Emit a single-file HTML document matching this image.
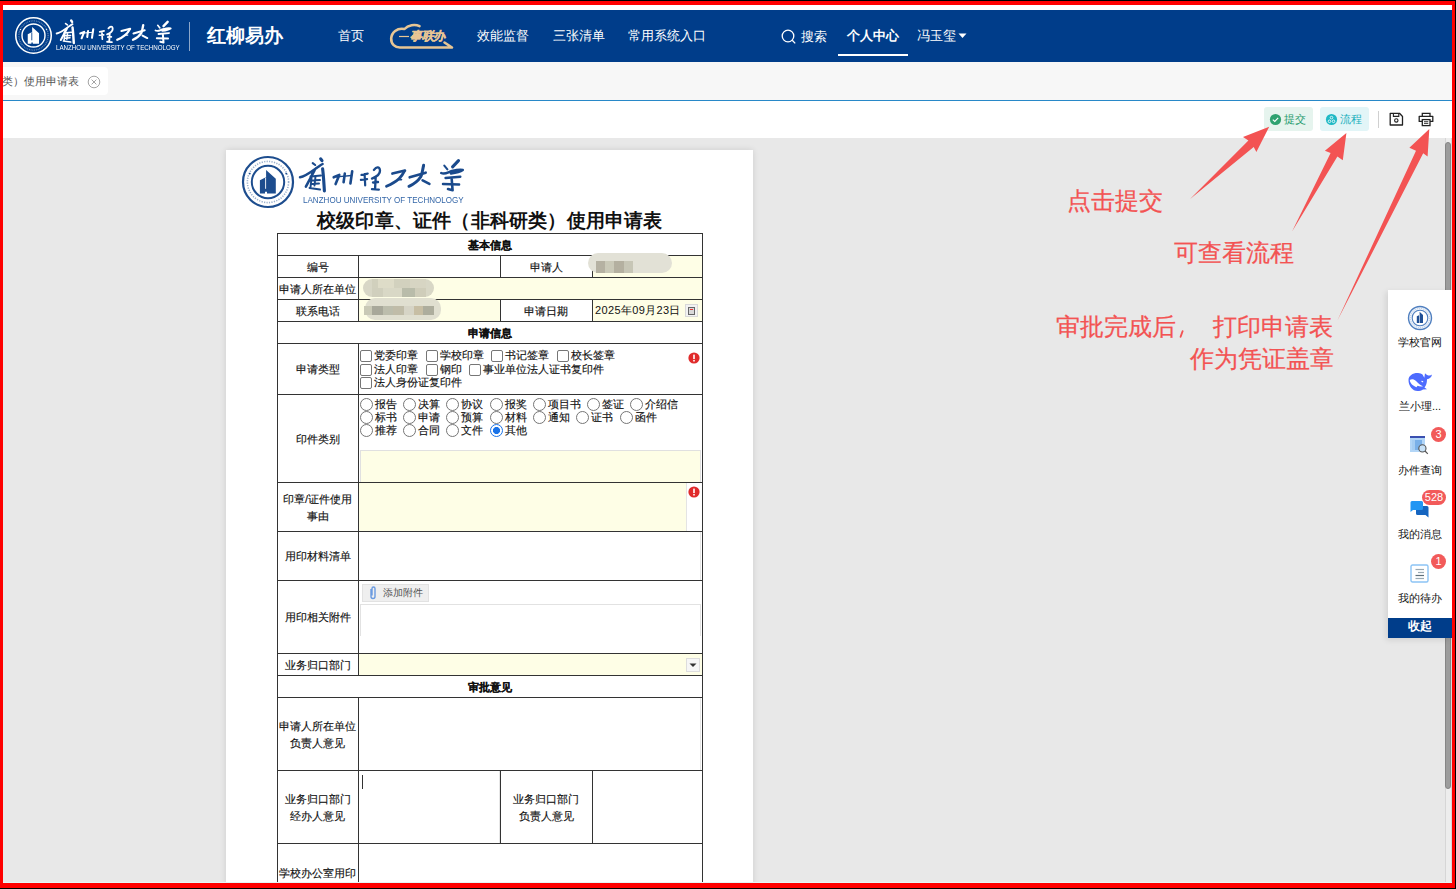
<!DOCTYPE html><html><head><meta charset="utf-8"><style>
html,body{margin:0;padding:0}
body{width:1456px;height:889px;position:relative;overflow:hidden;background:#e8e8e8;font-family:"Liberation Sans",sans-serif;}
div,span{box-sizing:border-box}
.cb{position:absolute;width:12px;height:12px;border:1px solid #767676;border-radius:2px;background:#fff}
.rd{position:absolute;width:13px;height:13px;border:1px solid #767676;border-radius:50%;background:#fff}
.ot{position:absolute;font-size:11.3px;color:#111;-webkit-text-stroke:0.15px #111;white-space:nowrap;line-height:13px}
.lb{position:absolute;font-size:11px;color:#111;-webkit-text-stroke:0.15px #111;white-space:nowrap;text-align:center}
.hl{position:absolute;height:1px;background:#333}
.vl{position:absolute;width:1px;background:#333}
.nav{position:absolute;top:27px;font-size:14px;color:#fff;white-space:nowrap;line-height:18px}
.sbt{position:absolute;left:1388px;width:64px;text-align:center;font-size:11px;color:#111;white-space:nowrap;line-height:12px}
.bdg{position:absolute;height:15px;border-radius:8px;background:#f25a5a;color:#fff;font-size:11px;line-height:15px;text-align:center}
</style></head><body>
<div style="position:absolute;left:3px;top:5px;width:1449px;height:5px;background:#fff"></div>
<div style="position:absolute;left:3px;top:10px;width:1449px;height:52px;background:#003d8a"></div>
<div style="position:absolute;left:3px;top:62px;width:1449px;height:38px;background:#f7f7f7"></div>
<div style="position:absolute;left:3px;top:100px;width:1449px;height:1px;background:#2888c8"></div>
<div style="position:absolute;left:3px;top:101px;width:1449px;height:37px;background:#fff"></div>

<svg style="position:absolute;left:0;top:0" width="300" height="70" viewBox="0 0 300 70"><g style="color:#fff" transform="translate(12.2,14.2) scale(0.71)">
<circle cx="30" cy="30" r="25" fill="none" stroke="currentColor" stroke-width="2.2"/>
<circle cx="30" cy="30" r="16.2" fill="none" stroke="currentColor" stroke-width="2"/>
<circle cx="30" cy="30" r="20.6" fill="none" stroke="currentColor" stroke-width="1.6" stroke-dasharray="1.2 1.3" opacity="0.45"/>
<circle cx="11.8" cy="21.6" r="0.9" fill="currentColor"/><circle cx="48.2" cy="21.6" r="0.9" fill="currentColor"/>
<path d="M21.9 28.3 L27.4 25.4 L28.1 25.4 L28.1 17.9 L37.8 26.7 L37.8 41.5 L29 41.5 L29 39.8 L27 39.8 L27 41.5 L21.9 41.5 Z" fill="currentColor"/><path d="M27.6 25.8 L27.6 36.8" stroke="#003d8a" stroke-width="1.2"/>
</g><g fill="none" stroke="#fff" stroke-linecap="round" stroke-linejoin="round" transform="translate(56,19.3) scale(0.7)"><path d="M21.7 1.8 L23 3.7" stroke-width="3.48"/><path d="M13.7 6.1 L16.2 8" stroke-width="2.32"/><path d="M1 20.3 C6 19.5 12 15 17.4 11.1 C19.5 9.7 21.5 8 23.6 7" stroke-width="2.75"/><path d="M15.5 13.5 L6.9 29.6" stroke-width="2.90"/><path d="M23.6 11.7 C24.5 18 24.8 25 25.4 33.9" stroke-width="3.48"/><path d="M11.5 19.5 L22 18.5 M11 23.5 L21 23 M13 16.5 L11.5 30.5 M16.5 19.5 L15.5 28.5 M10.5 31 L21 32.5 M12 27 L20 26.5" stroke-width="2.17"/><path d="M34.7 20.3 L40.3 17.9 L36.6 27.1 M45.8 16.6 L44.6 25.3 M53.2 14.2 L51.4 26.5" stroke-width="2.90"/><path d="M40.3 19.7 L52.6 18.5" stroke-width="1.45"/><path d="M62.5 17.9 L68.7 16.6 M61.9 22.8 L68.1 22.2 M65.6 17.2 L66.2 28.4" stroke-width="2.46"/><path d="M74.9 12.9 C77 10.5 80.5 8.5 81 13.5 C81.2 16.5 78 19.5 73 21.6 M76.7 19.7 L76.1 31.5 M73 32.1 L79.8 32.7 M74 25.5 L79 25" stroke-width="2.61"/><path d="M93.4 16.6 L106 13.5" stroke-width="2.90"/><path d="M105.4 14.2 C103 19 100 24 87.5 29.3" stroke-width="3.19"/><path d="M99.5 22.8 L102.5 22.6" stroke-width="1.74"/><path d="M110.7 20.3 L126.7 15.7" stroke-width="2.90"/><path d="M124.6 8.3 C123.5 13 123 18 121.8 19.7 C119 24 115 27 110 29.3" stroke-width="3.33"/><path d="M123.6 23.4 L130.4 26.8" stroke-width="2.90"/><path d="M159.5 3.7 L153.6 9.8" stroke-width="3.48"/><path d="M145.3 8.6 L148.4 12.3" stroke-width="2.32"/><path d="M142.2 16 C146 18 149 15 153 14 C157 13 162 12.5 163.8 13 C161 15 156 16 152 16.5" stroke-width="2.75"/><path d="M146.5 21 L161.3 19.7 M144 27.1 L160.1 27.4" stroke-width="2.75"/><path d="M152.7 22.2 L153.6 33.3 L149 32.1" stroke-width="2.90"/></g></svg>
<div style="position:absolute;left:56px;top:44px;white-space:nowrap;font-size:6.6px;line-height:8px;color:#fff;transform:scaleX(0.94);transform-origin:0 0">LANZHOU UNIVERSITY OF TECHNOLOGY</div>
<div style="position:absolute;left:189px;top:22px;width:1px;height:29px;background:rgba(255,255,255,0.55)"></div>
<div style="position:absolute;left:207px;top:24px;white-space:nowrap;font-size:19px;line-height:24px;color:#fff;font-weight:bold">红柳易办</div>
<div style="position:absolute;left:338px;top:27px;white-space:nowrap;font-size:13px;line-height:18px;color:#fff">首页</div>
<svg style="position:absolute;left:385px;top:20px" width="75" height="32" viewBox="0 0 75 32">
<path d="M34.5 6.2 C30 3.8 23 5 19.5 9 C12 7.5 6.5 12.5 6.2 18.5 C6 24 10 27.5 15 27.5 L67 27.5 L59.5 22.5" fill="none" stroke="#e6c594" stroke-width="2.6" stroke-linecap="round" stroke-linejoin="round"/>
<line x1="14" y1="16.5" x2="24" y2="16.5" stroke="#e6c594" stroke-width="1.2"/>
</svg>
<div style="position:absolute;left:410px;top:29px;white-space:nowrap;font-size:12px;line-height:14px;color:#e6c594;font-weight:bold;font-style:italic;letter-spacing:-0.5px;-webkit-text-stroke:0.3px #e6c594">事联办</div>
<div style="position:absolute;left:477px;top:27px;white-space:nowrap;font-size:13px;line-height:18px;color:#fff">效能监督</div>
<div style="position:absolute;left:553px;top:27px;white-space:nowrap;font-size:13px;line-height:18px;color:#fff">三张清单</div>
<div style="position:absolute;left:628px;top:27px;white-space:nowrap;font-size:13px;line-height:18px;color:#fff">常用系统入口</div>
<svg style="position:absolute;left:781px;top:29px" width="17" height="17" viewBox="0 0 17 17">
<circle cx="7" cy="7" r="5.8" fill="none" stroke="#fff" stroke-width="1.3"/>
<line x1="11.2" y1="11.2" x2="14.2" y2="14.4" stroke="#fff" stroke-width="1.3"/>
</svg>
<div style="position:absolute;left:801px;top:28px;white-space:nowrap;font-size:13px;line-height:18px;color:#fff">搜索</div>
<div style="position:absolute;left:847px;top:27px;white-space:nowrap;font-size:13px;line-height:18px;color:#fff;font-weight:bold">个人中心</div>
<div style="position:absolute;left:838px;top:54px;width:70px;height:2px;background:#fff"></div>
<div style="position:absolute;left:917px;top:27px;white-space:nowrap;font-size:13px;line-height:18px;color:#fff">冯玉玺</div>
<svg style="position:absolute;left:958px;top:33px" width="10" height="6" viewBox="0 0 10 6"><path d="M0.5 0.5 L8.5 0.5 L4.5 5 Z" fill="#fff"/></svg>
<div style="position:absolute;left:3px;top:67px;width:105px;height:28px;background:#fff;border-radius:0 4px 4px 0"></div>
<div style="position:absolute;left:1.5px;top:73px;white-space:nowrap;font-size:11.3px;line-height:16px;color:#555">类）使用申请表</div>
<svg style="position:absolute;left:87px;top:75px" width="14" height="14" viewBox="0 0 14 14">
<circle cx="7" cy="7" r="5.8" fill="none" stroke="#999" stroke-width="0.9"/>
<path d="M4.6 4.6 L9.4 9.4 M9.4 4.6 L4.6 9.4" stroke="#999" stroke-width="0.9"/>
</svg>
<div style="position:absolute;left:1264px;top:107px;width:49px;height:24px;background:#e6f4ee;border-radius:3px"></div>
<svg style="position:absolute;left:1269px;top:113px" width="13" height="13" viewBox="0 0 13 13">
<circle cx="6.5" cy="6.5" r="5.6" fill="#2ea270"/>
<path d="M3.8 6.6 L5.8 8.4 L9.2 4.8" fill="none" stroke="#fff" stroke-width="1.1"/>
</svg>
<div style="position:absolute;left:1284px;top:111px;white-space:nowrap;font-size:11px;line-height:16px;color:#23996a">提交</div>
<div style="position:absolute;left:1320px;top:107px;width:49px;height:24px;background:#e2f5f7;border-radius:3px"></div>
<svg style="position:absolute;left:1325px;top:113px" width="13" height="13" viewBox="0 0 13 13">
<circle cx="6.5" cy="6.5" r="5.6" fill="#1fb9c5"/>
<circle cx="6.5" cy="4.6" r="1.3" fill="none" stroke="#fff" stroke-width="0.8"/>
<circle cx="4.5" cy="8.3" r="1.3" fill="none" stroke="#fff" stroke-width="0.8"/>
<circle cx="8.5" cy="8.3" r="1.3" fill="none" stroke="#fff" stroke-width="0.8"/>
</svg>
<div style="position:absolute;left:1340px;top:111px;white-space:nowrap;font-size:11px;line-height:16px;color:#1ab0bd">流程</div>
<div style="position:absolute;left:1378px;top:111px;width:1px;height:17px;background:#d0d0d0"></div>
<svg style="position:absolute;left:1389px;top:112px" width="15" height="15" viewBox="0 0 15 15">
<path d="M1.2 1.3 H10.5 L13.5 4.5 V13 H1.2 Z" fill="none" stroke="#222" stroke-width="1.3" stroke-linejoin="round"/>
<path d="M4.4 1.3 V4.4 H9.8 V1.3" fill="none" stroke="#222" stroke-width="1.1"/>
<circle cx="7.3" cy="8.4" r="1.7" fill="none" stroke="#222" stroke-width="1.1"/>
</svg>
<svg style="position:absolute;left:1418px;top:112px" width="16" height="15" viewBox="0 0 16 15">
<path d="M4.3 4 V1.3 H12 V4" fill="none" stroke="#222" stroke-width="1.3"/>
<path d="M4.3 9.4 H1.2 V4.3 H14.8 V9.4 H12" fill="none" stroke="#222" stroke-width="1.3" stroke-linejoin="round"/>
<rect x="4.3" y="7.6" width="7.7" height="6" fill="#fff" stroke="#222" stroke-width="1.3"/>
<line x1="6" y1="9.7" x2="10.3" y2="9.7" stroke="#222" stroke-width="0.9"/>
<line x1="6" y1="11.4" x2="10.3" y2="11.4" stroke="#222" stroke-width="0.9"/>
</svg>
<div style="position:absolute;left:1445px;top:138px;width:7px;height:745px;background:#ededed;border-left:1px solid #d6d6d6;border-right:1px solid #d6d6d6"></div>
<div style="position:absolute;left:1445px;top:142px;width:6px;height:647px;background:#9c9c9c;border:1px solid #858585;border-radius:3px"></div>
<div style="position:absolute;left:226px;top:150px;width:527px;height:760px;background:#fff;box-shadow:0 0 6px rgba(0,0,0,0.12)"></div>
<svg style="position:absolute;left:0;top:0" width="760" height="240" viewBox="0 0 760 240"><g style="color:#1d4d8e" transform="translate(238,152)">
<circle cx="30" cy="30" r="25" fill="none" stroke="currentColor" stroke-width="2.2"/>
<circle cx="30" cy="30" r="16.2" fill="none" stroke="currentColor" stroke-width="2"/>
<circle cx="30" cy="30" r="20.6" fill="none" stroke="currentColor" stroke-width="1.6" stroke-dasharray="1.2 1.3" opacity="0.45"/>
<circle cx="11.8" cy="21.6" r="0.9" fill="currentColor"/><circle cx="48.2" cy="21.6" r="0.9" fill="currentColor"/>
<path d="M21.9 28.3 L27.4 25.4 L28.1 25.4 L28.1 17.9 L37.8 26.7 L37.8 41.5 L29 41.5 L29 39.8 L27 39.8 L27 41.5 L21.9 41.5 Z" fill="currentColor"/><path d="M27.6 25.8 L27.6 36.8" stroke="#fff" stroke-width="0.9"/>
</g><g fill="none" stroke="#1a4a8c" stroke-linecap="round" stroke-linejoin="round" transform="translate(299,157) scale(1.0)"><path d="M21.7 1.8 L23 3.7" stroke-width="3.12"/><path d="M13.7 6.1 L16.2 8" stroke-width="2.08"/><path d="M1 20.3 C6 19.5 12 15 17.4 11.1 C19.5 9.7 21.5 8 23.6 7" stroke-width="2.47"/><path d="M15.5 13.5 L6.9 29.6" stroke-width="2.60"/><path d="M23.6 11.7 C24.5 18 24.8 25 25.4 33.9" stroke-width="3.12"/><path d="M11.5 19.5 L22 18.5 M11 23.5 L21 23 M13 16.5 L11.5 30.5 M16.5 19.5 L15.5 28.5 M10.5 31 L21 32.5 M12 27 L20 26.5" stroke-width="1.95"/><path d="M34.7 20.3 L40.3 17.9 L36.6 27.1 M45.8 16.6 L44.6 25.3 M53.2 14.2 L51.4 26.5" stroke-width="2.60"/><path d="M40.3 19.7 L52.6 18.5" stroke-width="1.30"/><path d="M62.5 17.9 L68.7 16.6 M61.9 22.8 L68.1 22.2 M65.6 17.2 L66.2 28.4" stroke-width="2.21"/><path d="M74.9 12.9 C77 10.5 80.5 8.5 81 13.5 C81.2 16.5 78 19.5 73 21.6 M76.7 19.7 L76.1 31.5 M73 32.1 L79.8 32.7 M74 25.5 L79 25" stroke-width="2.34"/><path d="M93.4 16.6 L106 13.5" stroke-width="2.60"/><path d="M105.4 14.2 C103 19 100 24 87.5 29.3" stroke-width="2.86"/><path d="M99.5 22.8 L102.5 22.6" stroke-width="1.56"/><path d="M110.7 20.3 L126.7 15.7" stroke-width="2.60"/><path d="M124.6 8.3 C123.5 13 123 18 121.8 19.7 C119 24 115 27 110 29.3" stroke-width="2.99"/><path d="M123.6 23.4 L130.4 26.8" stroke-width="2.60"/><path d="M159.5 3.7 L153.6 9.8" stroke-width="3.12"/><path d="M145.3 8.6 L148.4 12.3" stroke-width="2.08"/><path d="M142.2 16 C146 18 149 15 153 14 C157 13 162 12.5 163.8 13 C161 15 156 16 152 16.5" stroke-width="2.47"/><path d="M146.5 21 L161.3 19.7 M144 27.1 L160.1 27.4" stroke-width="2.47"/><path d="M152.7 22.2 L153.6 33.3 L149 32.1" stroke-width="2.60"/></g></svg>
<div style="position:absolute;left:302.5px;top:193.5px;white-space:nowrap;font-size:9px;line-height:12px;color:#3567a8;transform:scaleX(0.894);transform-origin:0 0">LANZHOU UNIVERSITY OF TECHNOLOGY</div>
<div style="position:absolute;left:317px;top:209px;white-space:nowrap;font-size:19px;line-height:24px;color:#111;font-weight:bold;letter-spacing:0.2px">校级印章、证件（非科研类）使用申请表</div>
<div style="position:absolute;left:359px;top:278px;width:343px;height:21px;background:#fefee6"></div>
<div style="position:absolute;left:593px;top:256px;width:109px;height:21px;background:#fefee6"></div>
<div style="position:absolute;left:359px;top:300px;width:141px;height:21px;background:#fefee6"></div>
<div style="position:absolute;left:593px;top:300px;width:109px;height:21px;background:#fefee6"></div>
<div style="position:absolute;left:359px;top:483px;width:327px;height:48px;background:#fefee6"></div>
<div style="position:absolute;left:686px;top:483px;width:1px;height:48px;background:#e4e4e4"></div>
<div style="position:absolute;left:359px;top:654px;width:343px;height:21px;background:#fefee6"></div>
<div class="hl" style="left:277px;top:233px;width:426px"></div>
<div class="hl" style="left:277px;top:255px;width:426px"></div>
<div class="hl" style="left:277px;top:277px;width:426px"></div>
<div class="hl" style="left:277px;top:299px;width:426px"></div>
<div class="hl" style="left:277px;top:321px;width:426px"></div>
<div class="hl" style="left:277px;top:343px;width:426px"></div>
<div class="hl" style="left:277px;top:394px;width:426px"></div>
<div class="hl" style="left:277px;top:482px;width:426px"></div>
<div class="hl" style="left:277px;top:531px;width:426px"></div>
<div class="hl" style="left:277px;top:580px;width:426px"></div>
<div class="hl" style="left:277px;top:653px;width:426px"></div>
<div class="hl" style="left:277px;top:675px;width:426px"></div>
<div class="hl" style="left:277px;top:697px;width:426px"></div>
<div class="hl" style="left:277px;top:770px;width:426px"></div>
<div class="hl" style="left:277px;top:843px;width:426px"></div>
<div class="hl" style="left:277px;top:916px;width:426px"></div>
<div class="vl" style="left:277px;top:233px;height:660px"></div>
<div class="vl" style="left:702px;top:233px;height:660px"></div>
<div class="vl" style="left:358px;top:255px;height:66px"></div>
<div class="vl" style="left:358px;top:343px;height:332px"></div>
<div class="vl" style="left:358px;top:697px;height:219px"></div>
<div class="vl" style="left:500px;top:255px;height:22px"></div>
<div class="vl" style="left:592px;top:255px;height:22px"></div>
<div class="vl" style="left:500px;top:299px;height:22px"></div>
<div class="vl" style="left:592px;top:299px;height:22px"></div>
<div class="vl" style="left:500px;top:770px;height:73px"></div>
<div class="vl" style="left:592px;top:770px;height:73px"></div>
<div class="lb" style="left:277px;top:234px;width:425px;height:22px;display:flex;align-items:center;justify-content:center;line-height:17px;font-weight:bold">基本信息</div>
<div class="lb" style="left:277px;top:256px;width:81px;height:22px;display:flex;align-items:center;justify-content:center;line-height:17px;">编号</div>
<div class="lb" style="left:500px;top:256px;width:92px;height:22px;display:flex;align-items:center;justify-content:center;line-height:17px;">申请人</div>
<div class="lb" style="left:277px;top:278px;width:81px;height:22px;display:flex;align-items:center;justify-content:center;line-height:17px;">申请人所在单位</div>
<div class="lb" style="left:277px;top:300px;width:81px;height:22px;display:flex;align-items:center;justify-content:center;line-height:17px;">联系电话</div>
<div class="lb" style="left:500px;top:300px;width:92px;height:22px;display:flex;align-items:center;justify-content:center;line-height:17px;">申请日期</div>
<div class="lb" style="left:277px;top:322px;width:425px;height:22px;display:flex;align-items:center;justify-content:center;line-height:17px;font-weight:bold">申请信息</div>
<div class="lb" style="left:277px;top:344px;width:81px;height:51px;display:flex;align-items:center;justify-content:center;line-height:17px;">申请类型</div>
<div class="lb" style="left:277px;top:395px;width:81px;height:88px;display:flex;align-items:center;justify-content:center;line-height:17px;">印件类别</div>
<div class="lb" style="left:277px;top:483px;width:81px;height:49px;display:flex;align-items:center;justify-content:center;line-height:17px;">印章/证件使用<br>事由</div>
<div class="lb" style="left:277px;top:532px;width:81px;height:49px;display:flex;align-items:center;justify-content:center;line-height:17px;">用印材料清单</div>
<div class="lb" style="left:277px;top:581px;width:81px;height:73px;display:flex;align-items:center;justify-content:center;line-height:17px;">用印相关附件</div>
<div class="lb" style="left:277px;top:654px;width:81px;height:22px;display:flex;align-items:center;justify-content:center;line-height:17px;">业务归口部门</div>
<div class="lb" style="left:277px;top:676px;width:425px;height:22px;display:flex;align-items:center;justify-content:center;line-height:17px;font-weight:bold">审批意见</div>
<div class="lb" style="left:277px;top:698px;width:81px;height:73px;display:flex;align-items:center;justify-content:center;line-height:17px;">申请人所在单位<br>负责人意见</div>
<div class="lb" style="left:277px;top:771px;width:81px;height:73px;display:flex;align-items:center;justify-content:center;line-height:17px;">业务归口部门<br>经办人意见</div>
<div class="lb" style="left:500px;top:771px;width:92px;height:73px;display:flex;align-items:center;justify-content:center;line-height:17px;">业务归口部门<br>负责人意见</div>
<div class="lb" style="left:277px;top:844px;width:81px;height:59px;display:flex;align-items:center;justify-content:center;line-height:17px;">学校办公室用印</div>
<div style="position:absolute;left:595px;top:303px;white-space:nowrap;font-size:11px;line-height:15px;color:#111;letter-spacing:0.35px">2025年09月23日</div>
<div style="position:absolute;left:685px;top:304px;width:13px;height:13px;border:1px solid #d8d8d8;background:#f2f2f2"></div>
<div style="position:absolute;left:688px;top:307px;width:7px;height:8px;border:1px solid #666;background:#d9d9d9"></div>
<div style="position:absolute;left:690px;top:309px;width:3px;height:1px;background:#e33"></div>
<div class="cb" style="left:360px;top:350px"></div>
<div class="ot" style="left:374px;top:349px">党委印章</div>
<div class="cb" style="left:426px;top:350px"></div>
<div class="ot" style="left:440px;top:349px">学校印章</div>
<div class="cb" style="left:491px;top:350px"></div>
<div class="ot" style="left:505px;top:349px">书记签章</div>
<div class="cb" style="left:557px;top:350px"></div>
<div class="ot" style="left:571px;top:349px">校长签章</div>
<div class="cb" style="left:360px;top:364px"></div>
<div class="ot" style="left:374px;top:363px">法人印章</div>
<div class="cb" style="left:426px;top:364px"></div>
<div class="ot" style="left:440px;top:363px">钢印</div>
<div class="cb" style="left:469px;top:364px"></div>
<div class="ot" style="left:483px;top:363px">事业单位法人证书复印件</div>
<div class="cb" style="left:360px;top:377px"></div>
<div class="ot" style="left:374px;top:376px">法人身份证复印件</div>
<svg style="position:absolute;left:688px;top:351.5px" width="12" height="12" viewBox="0 0 12 12"><circle cx="6" cy="6" r="5.6" fill="#e02b2b"/><rect x="5.2" y="2.6" width="1.6" height="4.4" fill="#fff"/><rect x="5.2" y="7.9" width="1.6" height="1.6" fill="#fff"/></svg>
<svg style="position:absolute;left:688px;top:485.5px" width="12" height="12" viewBox="0 0 12 12"><circle cx="6" cy="6" r="5.6" fill="#e02b2b"/><rect x="5.2" y="2.6" width="1.6" height="4.4" fill="#fff"/><rect x="5.2" y="7.9" width="1.6" height="1.6" fill="#fff"/></svg>
<div class="rd" style="left:360px;top:398px"></div>
<div class="ot" style="left:374.5px;top:398px">报告</div>
<div class="rd" style="left:403px;top:398px"></div>
<div class="ot" style="left:417.5px;top:398px">决算</div>
<div class="rd" style="left:446px;top:398px"></div>
<div class="ot" style="left:460.5px;top:398px">协议</div>
<div class="rd" style="left:490px;top:398px"></div>
<div class="ot" style="left:504.5px;top:398px">报奖</div>
<div class="rd" style="left:533px;top:398px"></div>
<div class="ot" style="left:547.5px;top:398px">项目书</div>
<div class="rd" style="left:587px;top:398px"></div>
<div class="ot" style="left:601.5px;top:398px">签证</div>
<div class="rd" style="left:630px;top:398px"></div>
<div class="ot" style="left:644.5px;top:398px">介绍信</div>
<div class="rd" style="left:360px;top:411px"></div>
<div class="ot" style="left:374.5px;top:411px">标书</div>
<div class="rd" style="left:403px;top:411px"></div>
<div class="ot" style="left:417.5px;top:411px">申请</div>
<div class="rd" style="left:446px;top:411px"></div>
<div class="ot" style="left:460.5px;top:411px">预算</div>
<div class="rd" style="left:490px;top:411px"></div>
<div class="ot" style="left:504.5px;top:411px">材料</div>
<div class="rd" style="left:533px;top:411px"></div>
<div class="ot" style="left:547.5px;top:411px">通知</div>
<div class="rd" style="left:576px;top:411px"></div>
<div class="ot" style="left:590.5px;top:411px">证书</div>
<div class="rd" style="left:620px;top:411px"></div>
<div class="ot" style="left:634.5px;top:411px">函件</div>
<div class="rd" style="left:360px;top:424px"></div>
<div class="ot" style="left:374.5px;top:424px">推荐</div>
<div class="rd" style="left:403px;top:424px"></div>
<div class="ot" style="left:417.5px;top:424px">合同</div>
<div class="rd" style="left:446px;top:424px"></div>
<div class="ot" style="left:460.5px;top:424px">文件</div>
<div class="rd" style="left:490px;top:424px;border-color:#1a73e8;background:radial-gradient(circle,#1a73e8 0 3.3px,#fff 3.8px)"></div>
<div class="ot" style="left:504.5px;top:424px">其他</div>
<div style="position:absolute;left:360px;top:450px;width:341px;height:32px;background:#fefee6;border:1px solid #e0e0e0;border-bottom:none"></div>
<div style="position:absolute;left:359px;top:532px;width:342px;height:48px;border-right:1px solid #e6e6e6"></div>
<div style="position:absolute;left:362px;top:584px;width:67px;height:18px;background:#efefef;border:1px solid #e2e2e2"></div>
<svg style="position:absolute;left:369px;top:585px" width="8" height="15" viewBox="0 0 8 15"><path d="M2 4 V11.5 A2 2 0 0 0 6 11.5 V3.5 A1.5 1.5 0 0 0 3 3.5 V10.5" fill="none" stroke="#6b9be0" stroke-width="1.4"/></svg>
<div style="position:absolute;left:383px;top:586px;white-space:nowrap;font-size:10px;line-height:13px;color:#555">添加附件</div>
<div style="position:absolute;left:360px;top:604px;width:341px;height:32px;border:1px solid #e2e2e2;border-bottom:none"></div>
<div style="position:absolute;left:686px;top:658px;width:14px;height:14px;border:1px solid #ddd;background:#f6f6f6"></div>
<svg style="position:absolute;left:689px;top:663px" width="8" height="5" viewBox="0 0 8 5"><path d="M0.5 0.5 H7.5 L4 4 Z" fill="#333"/></svg>
<div style="position:absolute;left:362px;top:775px;width:1px;height:14px;background:#333"></div>
<div style="position:absolute;left:700px;top:698px;width:1px;height:72px;background:#e6e6e6"></div>
<div style="position:absolute;left:499px;top:771px;width:1px;height:72px;background:#e6e6e6"></div>
<div style="position:absolute;left:363px;top:279px;width:71px;height:18px;background:#d8d7c6;border-radius:9px;filter:blur(0.6px)"></div>
<div style="position:absolute;left:372px;top:279px;width:54px;height:9px;background:linear-gradient(90deg,#d1d0bd 0 11%,#dedcc8 11% 40%,#d2d1be 40% 70%,#d7d5c3 70%)"></div>
<div style="position:absolute;left:372px;top:288px;width:54px;height:9px;background:linear-gradient(90deg,#d0cfbd 0 20%,#d9d8c6 20% 55%,#b9bcaa 55% 80%,#cfcdba 80%)"></div>
<div style="position:absolute;left:365px;top:298px;width:76px;height:22px;background:#e0dfd0;border-radius:10px;filter:blur(0.6px)"></div>
<div style="position:absolute;left:364px;top:306px;width:70px;height:9px;background:linear-gradient(90deg,#c9c9b6 0 11%,#a8a89a 11% 27%,#bcbdac 27% 42%,#c0bca8 42% 57%,#d6d4c6 57% 72%,#c7bea4 72% 85%,#adad9d 85% 100%)"></div>
<div style="position:absolute;left:588px;top:253px;width:84px;height:20px;background:#e2e1d6;border-radius:10px;filter:blur(0.6px)"></div>
<div style="position:absolute;left:596px;top:261px;width:37px;height:12px;background:linear-gradient(90deg,#b5b1a2 0 25%,#cac9b8 25% 50%,#b4b0a0 50% 75%,#c7c6b6 75%)"></div>
<div style="position:absolute;left:1388px;top:290px;width:64px;height:348px;background:#fff;box-shadow:-2px 2px 6px rgba(0,0,0,0.10)"></div>
<svg style="position:absolute;left:1407px;top:305px" width="26" height="26" viewBox="0 0 26 26">
<circle cx="13" cy="13" r="11.5" fill="#eef3fa" stroke="#4f7fbf" stroke-width="1.4"/>
<circle cx="13" cy="13" r="7.8" fill="#fff" stroke="#4f7fbf" stroke-width="1.1"/>
<circle cx="13" cy="13" r="9.6" fill="none" stroke="#8fb0d8" stroke-width="0.6" stroke-dasharray="1 1"/>
<path d="M12.6 6.8 L16 10 L16 18 L12.6 18 Z" fill="#1f4f95"/>
<path d="M9.8 11.2 L12 10.2 L12 18 L9.8 18 Z" fill="#1f4f95"/>
</svg>
<div class="sbt" style="top:336px">学校官网</div>
<svg style="position:absolute;left:1400px;top:365px" width="40" height="30" viewBox="1400 365 40 30">
<path d="M1408.5,380 C1408.5,375.5 1413,372.8 1418,373 C1420,373.1 1421.5,373.6 1422.5,374.5 L1424.3,377.8 L1425,373.3 C1427,375.5 1430,376.5 1432,374.6 C1431.5,377.5 1429.5,379 1427,379.3 C1427,383 1426,386 1424.5,387.5 L1427,389.2 L1423,389.5 C1421.5,390.5 1419.5,391 1417.5,391 C1412.5,391 1408.5,386 1408.5,380 Z" fill="#4d6bfe"/>
<path d="M1409.8,380 C1411.5,378.5 1414,379 1416,381 C1418,383 1420,385 1423,386.3 C1421,386.8 1419,386.5 1417.5,385.7 L1416.5,387.3 C1414.5,386.5 1412,385 1410.8,383 C1410.2,382 1409.8,381 1409.8,380 Z" fill="#fff"/>
<ellipse cx="1422.3" cy="381.5" rx="1.1" ry="0.7" fill="#fff" transform="rotate(30 1422.3 381.5)"/>
</svg>
<div class="sbt" style="top:400px">兰小理...</div>
<svg style="position:absolute;left:1409px;top:435px" width="20" height="20" viewBox="0 0 20 20">
<rect x="1" y="1" width="15" height="16" fill="#b3d6f7"/>
<rect x="1" y="1" width="15" height="2" fill="#3a4fb0"/>
<rect x="3" y="5" width="10" height="10" fill="#7ab0e8"/>
<rect x="3" y="5" width="3" height="10" fill="#a6cdf2"/>
<circle cx="13.4" cy="13.4" r="3.6" fill="#c8e2f8" stroke="#555" stroke-width="1.1"/>
<line x1="16" y1="16" x2="18.8" y2="18.8" stroke="#555" stroke-width="1.2"/>
</svg>
<div class="bdg" style="left:1431px;top:427px;width:15px">3</div>
<div class="sbt" style="top:464px">办件查询</div>
<svg style="position:absolute;left:1410px;top:500px" width="20" height="20" viewBox="0 0 20 20">
<path d="M6 6 H17 A1.5 1.5 0 0 1 18.5 7.5 V17.5 L15.5 15 H7.5 A1.5 1.5 0 0 1 6 13.5 Z" fill="#1565c0"/>
<path d="M2 1 A1.5 1.5 0 0 0 0.5 2.5 V12 L3 10 H11.5 A1.5 1.5 0 0 0 13 8.5 V2.5 A1.5 1.5 0 0 0 11.5 1 Z" fill="#2196f3"/>
</svg>
<div class="bdg" style="left:1422px;top:490px;width:24px;height:15px">528</div>
<div class="sbt" style="top:528px">我的消息</div>
<svg style="position:absolute;left:1410px;top:564px" width="20" height="20" viewBox="0 0 20 20">
<rect x="1" y="1" width="17" height="17" rx="1.5" fill="#fff" stroke="#8cc4f5" stroke-width="1.4"/>
<line x1="5.5" y1="5.5" x2="14" y2="5.5" stroke="#9aa9b3" stroke-width="1.2"/>
<line x1="8" y1="8.5" x2="14" y2="8.5" stroke="#9aa9b3" stroke-width="1.2"/>
<line x1="5.5" y1="11.5" x2="14" y2="11.5" stroke="#60707a" stroke-width="1.2"/>
<line x1="5.5" y1="14.5" x2="14" y2="14.5" stroke="#9aa9b3" stroke-width="1.2"/>
</svg>
<div class="bdg" style="left:1431px;top:554px;width:15px">1</div>
<div class="sbt" style="top:592px">我的待办</div>
<div style="position:absolute;left:1388px;top:618px;width:64px;height:20px;background:#003d8a"></div>
<div class="sbt" style="top:620px;color:#fff;font-weight:bold;font-size:11.5px">收起</div>
<svg style="position:absolute;left:0;top:0" width="1456" height="889" viewBox="0 0 1456 889">
<polygon points="1190.1,198.9 1248.4,140.6 1243,136.9 1269.2,126.8 1256.4,151.9 1253.7,147" fill="#f35353"/>
<polygon points="1291.9,231.7 1330.6,153 1324.9,150.8 1346.4,133.1 1342.8,160.2 1337.4,156.4" fill="#f35353"/>
<line x1="1182.6" y1="331.2" x2="1180.6" y2="336.8" stroke="#f35353" stroke-width="1.9" stroke-linecap="round"/>
<polygon points="1337.3,320.8 1416,150.8 1409.4,147.7 1429.3,129 1427.6,156.6 1423.2,153.3" fill="#f35353"/>
</svg>
<div style="position:absolute;left:1067px;top:187px;white-space:nowrap;font-size:24px;line-height:28px;color:#f35353;-webkit-text-stroke:0.25px #f35353">点击提交</div>
<div style="position:absolute;left:1174px;top:239px;white-space:nowrap;font-size:24px;line-height:28px;color:#f35353;-webkit-text-stroke:0.25px #f35353">可查看流程</div>
<div style="position:absolute;left:1056px;top:313px;white-space:nowrap;font-size:24px;line-height:28px;color:#f35353;-webkit-text-stroke:0.25px #f35353">审批完成后</div>
<div style="position:absolute;left:1213px;top:313px;white-space:nowrap;font-size:24px;line-height:28px;color:#f35353;-webkit-text-stroke:0.25px #f35353">打印申请表</div>
<div style="position:absolute;left:1190px;top:345px;white-space:nowrap;font-size:24px;line-height:28px;color:#f35353;-webkit-text-stroke:0.25px #f35353">作为凭证盖章</div>
<div style="position:absolute;left:0px;top:0px;width:1456px;height:1px;background:#000"></div>
<div style="position:absolute;left:0px;top:1px;width:1455px;height:4px;background:#f00"></div>
<div style="position:absolute;left:0px;top:1px;width:3px;height:887px;background:#f00"></div>
<div style="position:absolute;left:1452px;top:1px;width:3px;height:887px;background:#f00"></div>
<div style="position:absolute;left:1455px;top:0px;width:1px;height:889px;background:#000"></div>
<div style="position:absolute;left:3px;top:882px;width:1449px;height:1px;background:#e2f6f6"></div>
<div style="position:absolute;left:0px;top:883px;width:1455px;height:5px;background:#f00"></div>
<div style="position:absolute;left:0px;top:888px;width:1456px;height:1px;background:#000"></div>
</body></html>
